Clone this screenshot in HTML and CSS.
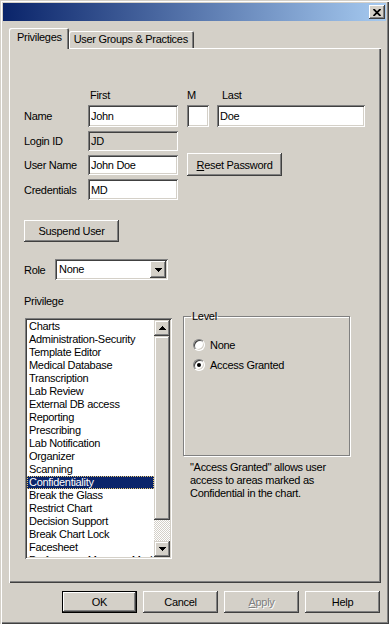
FILE: index.html
```html
<!DOCTYPE html>
<html lang="en">
<head>
  <meta charset="UTF-8">
  <meta name="viewport" content="width=device-width, initial-scale=1.0">
  <title>User Properties</title>
  <link rel="stylesheet" href="styles.css">
</head>
<body>
  <div class="window">
    <div class="titlebar">
      <button class="close-btn" type="button">
        <svg width="8" height="7" viewBox="0 0 8 7"><path d="M0.5 0 L7.5 7 M7.5 0 L0.5 7" stroke="#000" stroke-width="1.8"/></svg>
      </button>
    </div>

    <div class="tabs">
      <div class="tab active">Privileges</div>
      <div class="tab">User Groups &amp; Practices</div>
    </div>

    <div class="panel">
      <div class="name-grid">
        <span></span>
        <span class="col-head first">First</span>
        <span class="col-head mid">M</span>
        <span class="col-head last">Last</span>

        <label class="row-label">Name</label>
        <input class="field" type="text" value="John">
        <input class="field field-m" type="text" value="">
        <input class="field" type="text" value="Doe">

        <label class="row-label">Login ID</label>
        <div class="field disabled">JD</div>
        <span></span>
        <span></span>

        <label class="row-label">User Name</label>
        <input class="field" type="text" value="John Doe">
        <button class="btn reset-btn" type="button"><u>R</u>eset Password</button>

        <label class="row-label">Credentials</label>
        <input class="field" type="text" value="MD">
      </div>

      <button class="btn suspend-btn" type="button">Suspend User</button>

      <div class="role-row">
        <span class="role-label">Role</span>
        <div class="select">
          <span class="select-value">None</span>
          <span class="select-btn">
            <svg width="7" height="4" viewBox="0 0 7 4" shape-rendering="crispEdges"><path d="M0 0h7v1h-1v1h-1v1h-1v1h-1v-1h-1v-1h-1v-1h-1z" fill="#000"/></svg>
          </span>
        </div>
      </div>

      <div class="privilege-label">Privilege</div>

      <div class="lower">
        <div class="listbox">
          <ul class="list">
            <li>Charts</li>
            <li>Administration-Security</li>
            <li>Template Editor</li>
            <li>Medical Database</li>
            <li>Transcription</li>
            <li>Lab Review</li>
            <li>External DB access</li>
            <li>Reporting</li>
            <li>Prescribing</li>
            <li>Lab Notification</li>
            <li>Organizer</li>
            <li>Scanning</li>
            <li class="selected">Confidentiality</li>
            <li>Break the Glass</li>
            <li>Restrict Chart</li>
            <li>Decision Support</li>
            <li>Break Chart Lock</li>
            <li>Facesheet</li>
            <li>Preferences Manager Mode</li>
          </ul>
          <div class="scrollbar">
            <div class="sb-btn">
              <svg width="7" height="4" viewBox="0 0 7 4" shape-rendering="crispEdges"><path d="M3 0h1v1h1v1h1v1h1v1h-7v-1h1v-1h1v-1h1z" fill="#000"/></svg>
            </div>
            <div class="sb-thumb"></div>
            <div class="sb-track"></div>
            <div class="sb-btn">
              <svg width="7" height="4" viewBox="0 0 7 4" shape-rendering="crispEdges"><path d="M0 0h7v1h-1v1h-1v1h-1v1h-1v-1h-1v-1h-1v-1h-1z" fill="#000"/></svg>
            </div>
          </div>
        </div>

        <div class="level-col">
          <fieldset class="level-group">
            <legend>Level</legend>
            <label class="radio"><span class="radio-dot"></span>None</label>
            <label class="radio"><span class="radio-dot checked"></span>Access Granted</label>
          </fieldset>
          <p class="level-desc">"Access Granted" allows user access to areas marked as Confidential in the chart.</p>
        </div>
      </div>
    </div>

    <div class="actions">
      <button class="btn default-btn" type="button">OK</button>
      <button class="btn" type="button">Cancel</button>
      <button class="btn disabled-btn" type="button"><u>A</u>pply</button>
      <button class="btn" type="button">Help</button>
    </div>
  </div>
</body>
</html>
```

FILE: styles.css
```css
/* Reset */
* {
  margin: 0;
  padding: 0;
  box-sizing: border-box;
}

body {
  background: #d4d0c8;
  font-family: 'Liberation Sans', Arial, sans-serif;
  font-size: 11px;
  letter-spacing: -0.3px;
  color: #000;
}

/* Window frame */
.window {
  width: 389px;
  height: 624px;
  padding: 3px;
  background: #d4d0c8;
  box-shadow: inset 1px 1px #d4d0c8, inset 2px 2px #fff, inset -1px -1px #404040, inset -2px -2px #808080;
}

.titlebar {
  height: 18px;
  background: linear-gradient(to right, #0a246a, #a6caf0);
  display: flex;
  justify-content: flex-end;
  align-items: center;
  padding-right: 1px;
}

.close-btn {
  width: 16px;
  height: 14px;
  border: none;
  background: #d4d0c8;
  display: flex;
  align-items: center;
  justify-content: center;
  box-shadow: inset -1px -1px #404040, inset 1px 1px #fff, inset -2px -2px #808080;
}

/* Tabs */
.tabs {
  display: flex;
  align-items: flex-end;
  height: 20px;
  margin: 7px 0 0 6px;
}

.tab {
  height: 17px;
  padding: 0 6px 0 5px;
  line-height: 16px;
  background: #d4d0c8;
  box-shadow: inset 1px 1px #fff, inset -1px 0 #404040, inset -2px 0 #808080;
  border-radius: 2px 2px 0 0;
}

.tab.active {
  height: 21px;
  margin-bottom: -1px;
  padding: 0 7px 0 8px;
  line-height: 19px;
  position: relative;
  z-index: 1;
}

/* Tab panel */
.panel {
  width: 372px;
  height: 535px;
  margin-left: 6px;
  padding: 41px 14px 0 15px;
  box-shadow: inset 1px 1px #fff, inset -1px -1px #404040, inset -2px -2px #808080;
}

.name-grid {
  display: grid;
  grid-template-columns: 56px 90px 23px 148px;
  grid-template-rows: 12px 22px 20px 20px 21px;
  column-gap: 8px;
  row-gap: 4px;
  align-items: center;
}

.col-head {
  align-self: end;
  line-height: 13px;
  margin-bottom: -1px;
}

.col-head.first { padding-left: 2px; }
.col-head.mid { padding-left: 1px; }
.col-head.last { padding-left: 5px; }

.row-label {
  white-space: nowrap;
}

.field {
  height: 100%;
  width: 100%;
  border: none;
  outline: none;
  background: #fff;
  font: inherit;
  letter-spacing: inherit;
  color: #000;
  padding: 0 3px;
  display: flex;
  align-items: center;
  box-shadow: inset 1px 1px #808080, inset -1px -1px #fff, inset 2px 2px #404040, inset -2px -2px #d4d0c8;
}

.field-m {
  width: 22px;
  justify-self: end;
}

.field.disabled {
  background: #d4d0c8;
}

/* Buttons */
.btn {
  height: 22px;
  border: none;
  background: #d4d0c8;
  font: inherit;
  letter-spacing: inherit;
  color: #000;
  box-shadow: inset -1px -1px #404040, inset 1px 1px #fff, inset -2px -2px #808080;
}

.reset-btn {
  grid-column: 3 / 5;
  justify-self: start;
  align-self: start;
  width: 95px;
  height: 23px;
  margin: -2px 0 0 1px;
}

.suspend-btn {
  display: block;
  width: 95px;
  margin-top: 20px;
}

.default-btn {
  box-shadow: inset 0 0 0 1px #000, inset -2px -2px #404040, inset 2px 2px #fff, inset -3px -3px #808080;
}

.disabled-btn {
  color: #808080;
  text-shadow: 1px 1px #fff;
}

/* Role dropdown */
.role-row {
  display: flex;
  align-items: center;
  margin-top: 17px;
  height: 21px;
}

.role-label {
  width: 31px;
}

.select {
  width: 113px;
  height: 21px;
  display: flex;
  padding: 2px;
  background: #fff;
  box-shadow: inset 1px 1px #808080, inset -1px -1px #fff, inset 2px 2px #404040, inset -2px -2px #d4d0c8;
}

.select-value {
  flex: 1;
  padding-left: 2px;
  line-height: 17px;
}

.select-btn {
  width: 16px;
  height: 17px;
  display: flex;
  align-items: center;
  justify-content: center;
  background: #d4d0c8;
  box-shadow: inset -1px -1px #404040, inset 1px 1px #fff, inset -2px -2px #808080;
}

.privilege-label {
  margin-top: 15px;
  line-height: 13px;
}

/* Privilege list + level */
.lower {
  display: flex;
  align-items: flex-start;
}

.listbox {
  width: 147px;
  height: 241px;
  margin: 10px 0 0 1px;
  padding: 2px;
  display: flex;
  background: #fff;
  box-shadow: inset 1px 1px #808080, inset -1px -1px #fff, inset 2px 2px #404040, inset -2px -2px #d4d0c8;
}

.list {
  flex: 1;
  overflow: hidden;
  list-style: none;
  min-width: 0;
}

.list li {
  line-height: 13px;
  padding-left: 2px;
  white-space: nowrap;
}

.list li.selected {
  background: #0a246a;
  color: #fff;
  outline: 1px dotted #e8c870;
  outline-offset: -1px;
}

.scrollbar {
  width: 16px;
  display: flex;
  flex-direction: column;
}

.sb-btn {
  height: 16px;
  display: flex;
  align-items: center;
  justify-content: center;
  background: #d4d0c8;
  box-shadow: inset -1px -1px #404040, inset 1px 1px #d4d0c8, inset -2px -2px #808080, inset 2px 2px #fff;
}

.sb-thumb {
  height: 184px;
  background: #d4d0c8;
  box-shadow: inset -1px -1px #404040, inset 1px 1px #d4d0c8, inset -2px -2px #808080, inset 2px 2px #fff;
}

.sb-track {
  flex: 1;
  background: repeating-conic-gradient(#fff 0 25%, #d4d0c8 0 50%) 0 0 / 2px 2px;
}

.level-col {
  margin: 2px 0 0 11px;
  width: 167px;
}

.level-group {
  height: 146px;
  border: 1px solid #808080;
  box-shadow: inset 1px 1px #fff, 1px 1px #fff;
  padding: 12px 0 0 9px;
}

.level-group legend {
  margin-left: -2px;
  padding: 0 1px;
  line-height: 13px;
}

.radio {
  display: flex;
  align-items: center;
  height: 20px;
  gap: 5px;
}

.radio-dot {
  width: 12px;
  height: 12px;
  border-radius: 50%;
  background: #fff;
  border: 1px solid;
  border-color: #808080 #fff #fff #808080;
  box-shadow: inset 1px 1px #404040, inset -1px -1px #d4d0c8;
  display: flex;
  align-items: center;
  justify-content: center;
}

.radio-dot.checked::after {
  content: '';
  width: 4px;
  height: 4px;
  border-radius: 50%;
  background: #000;
}

.level-desc {
  margin: 5px 0 0 7px;
  width: 155px;
  line-height: 13px;
}

/* Dialog buttons */
.actions {
  display: flex;
  justify-content: flex-end;
  gap: 6px;
  margin-top: 8px;
  padding-right: 6px;
}

.actions .btn {
  width: 75px;
}
```
